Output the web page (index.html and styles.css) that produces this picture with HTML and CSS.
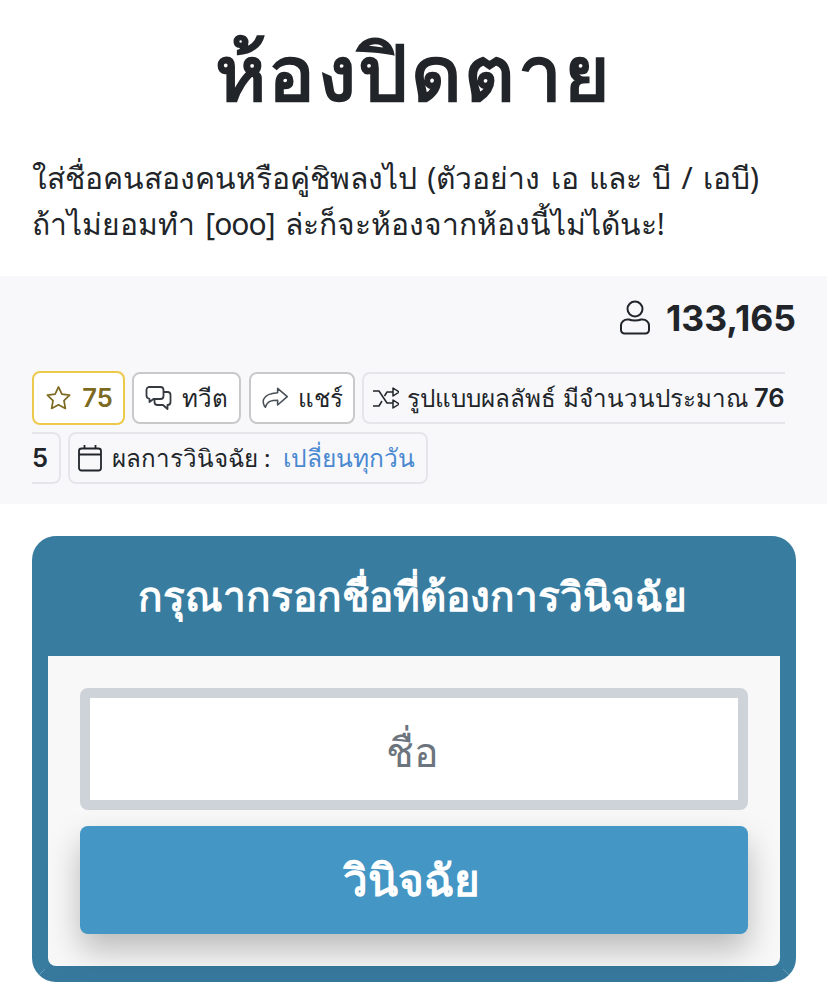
FILE: index.html
```html
<!DOCTYPE html>
<html lang="th">

<head>
    <meta charset="UTF-8">
    <meta name="viewport" content="width=device-width, initial-scale=1.0">
    <title>ห้องปิดตาย</title>
    <link rel="stylesheet" href="styles.css">
</head>

<body>
    <h1 class="title">ห้องปิดตาย</h1>
    <p class="desc">ใส่ชื่อคนสองคนหรือคู่ชิพลงไป (ตัวอย่าง เอ และ บี / เอบี)<br>ถ้าไม่ยอมทำ <span class="slot">[ooo]</span> ล่ะก็จะห้องจากห้องนี้ไม่ได้นะ!</p>

    <div class="info">
        <div class="count">
            <svg class="icon-user" viewBox="0 0 30 36" fill="none" stroke="#212529" stroke-width="2">
                <circle cx="15" cy="9" r="7.500"/>
                <path d="M9 19.500c3 1.400 9 1.400 12 0h1.500c3.500 0 6.500 2.500 6.500 6v4.500a3.500 3.500 0 0 1-3.500 3.500h-21a3.500 3.500 0 0 1-3.500-3.500v-4.500c0-3.500 3-6 6.500-6z"/>
            </svg>
            <span>133,165</span>
        </div>
        <div class="tags">
            <span class="tag tag-star"><svg class="ico ico-star" viewBox="0 0 28 28" fill="none" stroke="#7d6a22" stroke-width="1.800" stroke-linejoin="round"><path d="M14 2.500l3.500 7.400 8 1.100-5.800 5.700 1.400 8.100-7.100-3.900-7.100 3.900 1.400-8.100-5.800-5.700 8-1.100z"/></svg> <b>75</b></span>
            <span class="tag tag-btn"><svg class="ico ico-chat" viewBox="0 0 28 28" fill="none" stroke="#343a40" stroke-width="1.800" stroke-linejoin="round"><path d="M4 3h12a3 3 0 0 1 3 3v6a3 3 0 0 1-3 3h-7l-4 3v-3.200a3 3 0 0 1-3-3v-6a3 3 0 0 1 2-2.800z"/><path d="M19 8h4a3 3 0 0 1 3 3v7a3 3 0 0 1-3 3v4l-4.500-4h-5.500a3 3 0 0 1-3-3v-3"/></svg> ทวีต</span>
            <span class="tag tag-btn tag-share"><svg class="ico ico-share" viewBox="0 0 32 28" fill="none" stroke="#495057" stroke-width="1.800" stroke-linejoin="round"><path d="M19 3l11 9.500-11 9.500v-5.500c-7 0-12 1-14 8-2.500-3-3-6-2-9 2-5 8-7 16-7.500z"/></svg> แชร์</span>
            <span class="tag"><svg class="ico ico-shuffle" viewBox="0 0 26 24" fill="none" stroke="#212529" stroke-width="1.500" stroke-linejoin="round"><path d="M0 5h6l8 12h6M0 20h6l3-5M11.500 10l2.500-4h6"/><path d="M20 2l6 4-6 4zM20 14l6 4-6 4z"/></svg> รูปแบบผลลัพธ์ มีจำนวนประมาณ <b>765</b></span>
            <span class="tag tag-date"><svg class="ico ico-date" viewBox="0 0 24 28" fill="none" stroke="#212529" stroke-width="1.800"><rect x="1" y="4.500" width="22" height="22" rx="2.500"/><path d="M1 10.500h22M6.500 1v3.500M17.500 1v3.500"/></svg> ผลการวินิจฉัย :&nbsp; <span class="blue">เปลี่ยนทุกวัน</span></span>
        </div>
    </div>

    <form class="card">
        <div class="card-head">กรุณากรอกชื่อที่ต้องการวินิจฉัย</div>
        <div class="card-body">
            <input class="name" type="text" placeholder="ชื่อ">
            <button class="submit" type="button">วินิจฉัย</button>
        </div>
    </form>
</body>

</html>
```
FILE: styles.css
```css
* {
    margin: 0;
    padding: 0;
    box-sizing: border-box;
}

body {
    background: #fff;
    color: #212529;
    font-family: "Noto Sans", "Inter", "Liberation Sans", sans-serif;
    font-size: 30px;
}

.title {
    height: 150px;
    font-size: 78px;
    line-height: 143px;
    letter-spacing: 2.500px;
    text-align: center;
    font-weight: 800;
}

.desc {
    height: 126px;
    padding: 5px 32px 0;
    font-size: 30px;
    line-height: 46px;
    word-spacing: 2.500px;
}

.slot {
    letter-spacing: -1px;
}

.info {
    height: 228px;
    padding: 22px 32px 0;
    background: #f8f8fb;
}

.count {
    display: flex;
    justify-content: flex-end;
    align-items: center;
    gap: 16px;
    height: 40px;
    margin-right: -1px;
    font-family: "Inter", "Liberation Sans", sans-serif;
    font-size: 35.500px;
    font-weight: 700;
}

.icon-user {
    width: 30px;
    height: 36px;
}

.tags {
    width: 754px;
    margin-top: 30px;
    font-size: 24.150px;
    line-height: 60px;
    word-break: break-all;
}

.tag {
    padding: 7px 11px 8px 9px;
    margin-right: 1px;
    background: #f8f8fb;
    border: 2px solid #e6e6ea;
    border-radius: 8px;
}

.tag b {
    font-family: "Inter", "Liberation Sans", sans-serif;
    font-size: 25.500px;
    font-weight: 600;
}

.tag-star {
    padding: 8px 10px 9px 11px;
    background: #fff;
    border-color: #ecc94b;
    color: #7d6a22;
}

.tag-btn {
    padding-left: 10px;
    background: #fff;
    border-color: #c9c9cc;
}

.tag-share {
    padding-right: 10px;
}

.tag-date {
    padding-left: 8px;
}

.ico {
    width: 28px;
    height: 28px;
    margin-right: 3px;
    vertical-align: -5px;
}

.ico-star {
    width: 27px;
    margin-right: 4px;
}

.ico-chat {
    width: 29px;
}

.ico-shuffle {
    width: 26px;
    height: 24px;
    margin-right: 2px;
    vertical-align: -3px;
}

.ico-date {
    width: 24px;
}

.blue {
    color: #4a89d0;
    font-size: 24.500px;
}

.card {
    display: block;
    margin: 32px 31px 0 32px;
    height: 446px;
    background: #387ca0;
    border: 16px solid #387ca0;
    border-top: 0;
    border-bottom-color: #37799d;
    border-radius: 24px;
}

.card-head {
    height: 120px;
    padding-right: 4px;
    line-height: 120px;
    text-align: center;
    color: #fff;
    font-size: 40.500px;
    font-weight: 700;
}

.card-body {
    height: 310px;
    padding: 32px;
    background: #f8f8f9;
    border-radius: 0 0 8px 8px;
}

.name {
    display: block;
    width: 100%;
    height: 122px;
    padding: 4px 4px 0 0;
    border: 10px solid #ced2d9;
    border-radius: 8px;
    outline: none;
    background: #fff;
    font-family: inherit;
    font-size: 41px;
    text-align: center;
}

.name::placeholder {
    color: #6c757d;
    opacity: 1;
}

.submit {
    display: block;
    width: 100%;
    height: 108px;
    margin-top: 16px;
    padding-right: 5px;
    border: 0;
    border-radius: 8px;
    background: #4496c4;
    box-shadow: 0 16px 32px rgba(0, 0, 0, .25);
    color: #fff;
    font-family: inherit;
    font-size: 44px;
    font-weight: 700;
}
```
